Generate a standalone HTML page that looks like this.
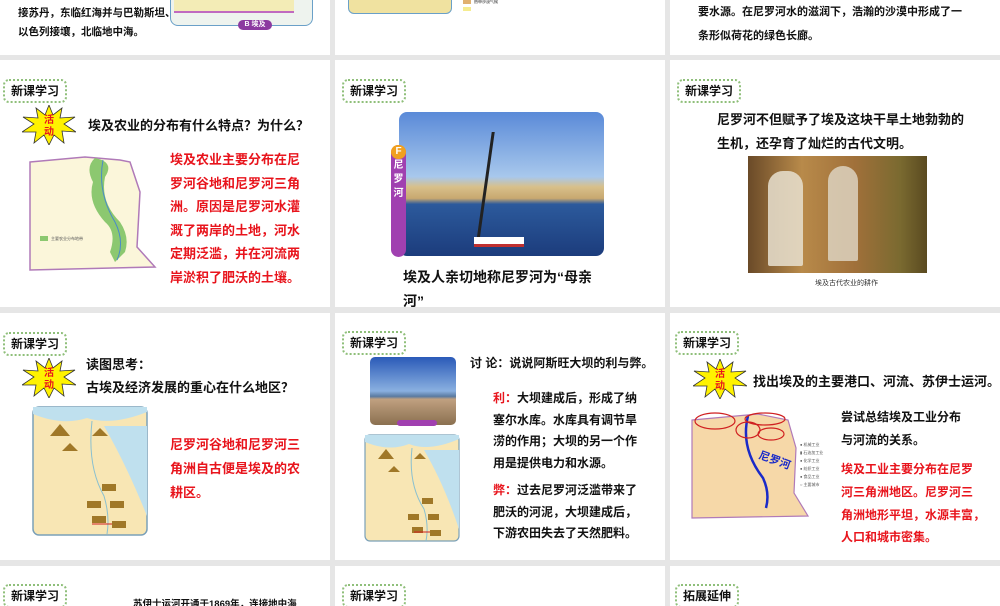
<!DOCTYPE html>
<html><head><meta charset="utf-8"><style>
*{margin:0;padding:0;box-sizing:border-box}
body{width:1000px;height:600px;overflow:hidden;background:#e6e6e6;position:relative;font-family:"Liberation Sans","Noto Sans CJK SC",sans-serif;font-weight:bold;color:#111}
.s{position:absolute;background:#fff;overflow:hidden}
.a{position:absolute;white-space:nowrap}
.b{position:absolute;border:2px dotted #8fbf7a;border-radius:6px;font-size:12px;padding:2px 6px;line-height:16px;background:#fff}
.r{color:#e8141c}
.t13{font-size:13px}
.t12{font-size:12px}
.star{position:absolute;width:54px;height:40px}
</style></head><body>

<!-- top row -->
<div class="s" style="left:0;top:0;width:330px;height:55px">
 <div class="a" style="left:18px;top:5px;font-size:10.5px">接苏丹，东临红海并与巴勒斯坦、</div>
 <div class="a" style="left:18px;top:24px;font-size:10.5px">以色列接壤，北临地中海。</div>
 <div class="a" style="left:170px;top:-5px;width:143px;height:31px;border:1.5px solid #6aa0c8;border-radius:0 0 8px 8px;background:#eef3ee"></div>
 <div class="a" style="left:174px;top:-5px;width:120px;height:18px;background:#f3ecb6;border-bottom:2px solid #c06ac0"></div>
 <div class="a" style="left:238px;top:20px;width:34px;height:10px;border-radius:5px;background:#8c3aa0;color:#fff;font-size:7px;line-height:10px;text-align:center">B 埃及</div>
</div>
<div class="s" style="left:335px;top:0;width:330px;height:55px">
 <div class="a" style="left:13px;top:-5px;width:104px;height:19px;border:1.5px solid #6aa0c8;border-radius:0 0 6px 6px;background:#f0e2a0"></div>
 <div class="a" style="left:128px;top:0;width:8px;height:4px;background:#e0b070"></div>
 <div class="a" style="left:128px;top:7px;width:8px;height:4px;background:#f5ec90"></div>
 <div class="a" style="left:139px;top:-1px;font-size:4px;color:#666">热带沙漠气候</div>
</div>
<div class="s" style="left:670px;top:0;width:330px;height:55px">
 <div class="a" style="left:28px;top:3px;font-size:11px">要水源。在尼罗河水的滋润下，浩瀚的沙漠中形成了一</div>
 <div class="a" style="left:28px;top:27px;font-size:11px">条形似荷花的绿色长廊。</div>
</div>

<!-- row 2 col1 -->
<div class="s" style="left:0;top:60px;width:330px;height:247px">
 <div class="b" style="left:3px;top:19px">新课学习</div>
 <svg class="star" style="left:22px;top:45px" viewBox="0 0 54 40"><polygon points="27,0 31,10 40,3 38,13 53,12 42,19 54,27 40,26 42,38 32,30 27,40 22,30 12,38 14,27 0,27 12,19 1,12 16,13 14,3 23,10" fill="#fff200" stroke="#333" stroke-width="0.8"/><text x="27" y="18" font-size="10" fill="#e8141c" text-anchor="middle" font-weight="bold">活</text><text x="27" y="30" font-size="10" fill="#e8141c" text-anchor="middle" font-weight="bold">动</text></svg>
 <div class="a t13" style="left:88px;top:55px">埃及农业的分布有什么特点？为什么？</div>
 <svg class="a" style="left:25px;top:92px" width="140" height="120" viewBox="0 0 140 120"><polygon points="5,10 60,5 95,8 105,10 115,40 112,95 130,115 5,118" fill="#fbf6da" stroke="#b07ab8" stroke-width="1.5"/><path d="M70,6 Q90,10 80,25 Q75,50 95,70 Q105,85 100,100 L90,110 L85,100 Q92,80 80,70 Q62,50 68,30 Q60,15 70,6Z" fill="#8cc870"/><path d="M78,8 Q72,40 90,70 Q100,90 92,108" stroke="#4a8ac8" fill="none"/><rect x="15" y="84" width="8" height="5" fill="#8cc870"/><text x="26" y="88" font-size="4" fill="#555" font-weight="normal">主要农业分布地带</text></svg>
 <div class="r t13" style="position:absolute;left:170px;top:88px;line-height:23.5px;width:135px">埃及农业主要分布在尼罗河谷地和尼罗河三角洲。原因是尼罗河水灌溉了两岸的土地，河水定期泛滥，并在河流两岸淤积了肥沃的土壤。</div>
</div>

<!-- row2 col2 -->
<div class="s" style="left:335px;top:60px;width:330px;height:247px">
 <div class="b" style="left:7px;top:19px">新课学习</div>
 <div class="a" style="left:64px;top:52px;width:205px;height:144px;border-radius:8px;overflow:hidden;background:linear-gradient(#5a8ad8 0%,#a8c8ec 45%,#d8c08a 52%,#c8a870 60%,#2c5a9c 64%,#1c3c7c 100%)">
  <div class="a" style="left:85px;top:20px;width:3px;height:110px;background:#222;transform:skewX(-8deg)"></div>
  <div class="a" style="left:75px;top:125px;width:50px;height:10px;background:#fff;border-bottom:3px solid #c03030"></div>
 </div>
 <div class="a" style="left:56px;top:85px;width:15px;height:112px;border-radius:8px;background:#a040b0;color:#fff;font-size:10px;text-align:center;line-height:14px;white-space:normal"><span style="display:block;background:#f0a020;border-radius:7px">F</span>尼<br>罗<br>河</div>
 <div class="a" style="left:68px;top:207px;font-size:14px">埃及人亲切地称尼罗河为“母亲</div>
 <div class="a" style="left:68px;top:231px;font-size:14px">河”</div>
</div>

<!-- row2 col3 -->
<div class="s" style="left:670px;top:60px;width:330px;height:247px">
 <div class="b" style="left:7px;top:19px">新课学习</div>
 <div class="a t13" style="left:47px;top:49px">尼罗河不但赋予了埃及这块干旱土地勃勃的</div>
 <div class="a t13" style="left:47px;top:73px">生机，还孕育了灿烂的古代文明。</div>
 <div class="a" style="left:78px;top:96px;width:179px;height:117px;background:linear-gradient(90deg,#6a4a28,#b88a4a 30%,#a0703a 60%,#7a6a30 85%,#5a4a20)">
  <div class="a" style="left:20px;top:15px;width:35px;height:95px;background:#e8e0d0;border-radius:15px 15px 2px 2px;opacity:.85"></div>
  <div class="a" style="left:80px;top:10px;width:30px;height:95px;background:#e0d8c8;border-radius:15px 15px 2px 2px;opacity:.8"></div>
 </div>
 <div class="a" style="left:145px;top:218px;font-size:7px;font-weight:normal;color:#333">埃及古代农业的耕作</div>
</div>

<!-- row3 col1 -->
<div class="s" style="left:0;top:313px;width:330px;height:247px">
 <div class="b" style="left:3px;top:19px">新课学习</div>
 <svg class="star" style="left:22px;top:45px" viewBox="0 0 54 40"><polygon points="27,0 31,10 40,3 38,13 53,12 42,19 54,27 40,26 42,38 32,30 27,40 22,30 12,38 14,27 0,27 12,19 1,12 16,13 14,3 23,10" fill="#fff200" stroke="#333" stroke-width="0.8"/><text x="27" y="18" font-size="10" fill="#e8141c" text-anchor="middle" font-weight="bold">活</text><text x="27" y="30" font-size="10" fill="#e8141c" text-anchor="middle" font-weight="bold">动</text></svg>
 <div class="a t13" style="left:86px;top:41px">读图思考：</div>
 <div class="a t13" style="left:86px;top:64px">古埃及经济发展的重心在什么地区？</div>
 <svg class="a" style="left:32px;top:93px" width="116" height="130" viewBox="0 0 116 130"><rect x="1" y="1" width="114" height="128" rx="6" fill="#f8e6b4" stroke="#7aa0b8" stroke-width="1.5"/><path d="M1,8 Q30,20 55,12 Q80,20 115,6 L115,1 L1,1Z" fill="#bfe0ee"/><path d="M72,20 Q95,60 115,110 L115,20Z" fill="#bfe0ee"/><path d="M60,15 Q55,60 72,90 Q78,110 75,128" stroke="#8ac0d0" fill="none"/><g fill="#a07828"><polygon points="18,30 28,18 38,30"/><polygon points="60,30 68,22 76,30"/><polygon points="30,45 38,37 46,45"/><rect x="70" y="78" width="14" height="7"/><rect x="55" y="95" width="14" height="7"/><rect x="78" y="95" width="14" height="7"/><rect x="60" y="110" width="14" height="7"/><rect x="80" y="115" width="14" height="7"/></g><line x1="60" y1="118" x2="80" y2="118" stroke="#d02020"/></svg>
 <div class="r t13" style="position:absolute;left:170px;top:120px;line-height:24px;width:135px">尼罗河谷地和尼罗河三角洲自古便是埃及的农耕区。</div>
</div>

<!-- row3 col2 -->
<div class="s" style="left:335px;top:313px;width:330px;height:247px">
 <div class="b" style="left:7px;top:18px">新课学习</div>
 <div class="a" style="left:35px;top:44px;width:86px;height:68px;border-radius:5px;overflow:hidden;background:linear-gradient(#2a5ab8,#8ab0e0 50%,#5a7aa0 58%,#c0a080 62%,#8a7050)"></div>
 <div class="a" style="left:62px;top:107px;width:40px;height:6px;border-radius:3px;background:#a040b0"></div>
 <svg class="a" style="left:29px;top:121px" width="96" height="108" viewBox="0 0 96 108"><rect x="1" y="1" width="94" height="106" rx="5" fill="#f8e6b4" stroke="#7aa0b8" stroke-width="1.2"/><path d="M1,8 Q25,18 45,10 Q65,18 95,5 L95,1 L1,1Z" fill="#bfe0ee"/><path d="M60,16 Q80,50 95,95 L95,16Z" fill="#bfe0ee"/><path d="M48,14 Q44,50 60,75 Q65,92 62,107" stroke="#8ac0d0" fill="none"/><g fill="#a07828"><polygon points="14,25 22,15 30,25"/><polygon points="50,25 56,19 62,25"/><polygon points="24,38 30,32 36,38"/><rect x="58" y="64" width="11" height="6"/><rect x="44" y="80" width="11" height="6"/><rect x="64" y="80" width="11" height="6"/><rect x="48" y="93" width="11" height="6"/><rect x="66" y="96" width="11" height="6"/></g><line x1="50" y1="98" x2="66" y2="98" stroke="#d02020"/></svg>
 <div class="a t12" style="left:135px;top:41px">讨 论：说说阿斯旺大坝的利与弊。</div>
 <div class="t12" style="position:absolute;left:158px;top:75px;line-height:21.7px;width:148px"><span class="r">利：</span>大坝建成后，形成了纳塞尔水库。水库具有调节旱涝的作用；大坝的另一个作用是提供电力和水源。</div>
 <div class="t12" style="position:absolute;left:158px;top:167px;line-height:21.7px;width:150px"><span class="r">弊：</span>过去尼罗河泛滥带来了肥沃的河泥，大坝建成后，下游农田失去了天然肥料。</div>
</div>

<!-- row3 col3 -->
<div class="s" style="left:670px;top:313px;width:330px;height:247px">
 <div class="b" style="left:5px;top:18px">新课学习</div>
 <svg class="star" style="left:23px;top:46px" viewBox="0 0 54 40"><polygon points="27,0 31,10 40,3 38,13 53,12 42,19 54,27 40,26 42,38 32,30 27,40 22,30 12,38 14,27 0,27 12,19 1,12 16,13 14,3 23,10" fill="#fff200" stroke="#333" stroke-width="0.8"/><text x="27" y="18" font-size="10" fill="#e8141c" text-anchor="middle" font-weight="bold">活</text><text x="27" y="30" font-size="10" fill="#e8141c" text-anchor="middle" font-weight="bold">动</text></svg>
 <div class="a t13" style="left:83px;top:58px">找出埃及的主要港口、河流、苏伊士运河。</div>
 <svg class="a" style="left:18px;top:95px" width="150" height="115" viewBox="0 0 150 115"><polygon points="4,12 70,6 100,12 108,40 106,85 120,108 4,110" fill="#f6d8a8" stroke="#b07ab8" stroke-width="1.2"/><path d="M60,8 Q52,40 75,70 Q82,85 78,100" stroke="#1a2ac8" stroke-width="2.5" fill="none"/><ellipse cx="27" cy="13" rx="20" ry="8" fill="none" stroke="#d02020" stroke-width="1.2"/><ellipse cx="77" cy="11" rx="20" ry="6" fill="none" stroke="#d02020" stroke-width="1.2"/><ellipse cx="60" cy="22" rx="12" ry="8" fill="none" stroke="#d02020" stroke-width="1.2"/><ellipse cx="83" cy="26" rx="13" ry="6" fill="none" stroke="#d02020" stroke-width="1.2"/><text x="70" y="50" font-size="11" fill="#1a2ac8" font-weight="bold" transform="rotate(20 70 50)">尼罗河</text><g font-size="4" fill="#555" font-weight="normal"><text x="112" y="38">● 机械工业</text><text x="112" y="46">▮ 石油加工业</text><text x="112" y="54">● 化学工业</text><text x="112" y="62">● 纺织工业</text><text x="112" y="70">● 食品工业</text><text x="112" y="78">○ 主要城市</text></g></svg>
 <div class="a t12" style="left:171px;top:95px">尝试总结埃及工业分布</div>
 <div class="a t12" style="left:171px;top:118px">与河流的关系。</div>
 <div class="r t12" style="position:absolute;left:171px;top:145px;line-height:22.8px;white-space:nowrap">埃及工业主要分布在尼罗<br>河三角洲地区。尼罗河三<br>角洲地形平坦，水源丰富，<br>人口和城市密集。</div>
</div>

<!-- row 4 -->
<div class="s" style="left:0;top:566px;width:330px;height:40px">
 <div class="b" style="left:3px;top:18px">新课学习</div>
 <div class="a" style="left:133px;top:30px;font-size:9.5px">苏伊士运河开通于1869年，连接地中海</div>
</div>
<div class="s" style="left:335px;top:566px;width:330px;height:40px">
 <div class="b" style="left:7px;top:18px">新课学习</div>
</div>
<div class="s" style="left:670px;top:566px;width:330px;height:40px">
 <div class="b" style="left:5px;top:18px">拓展延伸</div>
</div>
</body></html>
